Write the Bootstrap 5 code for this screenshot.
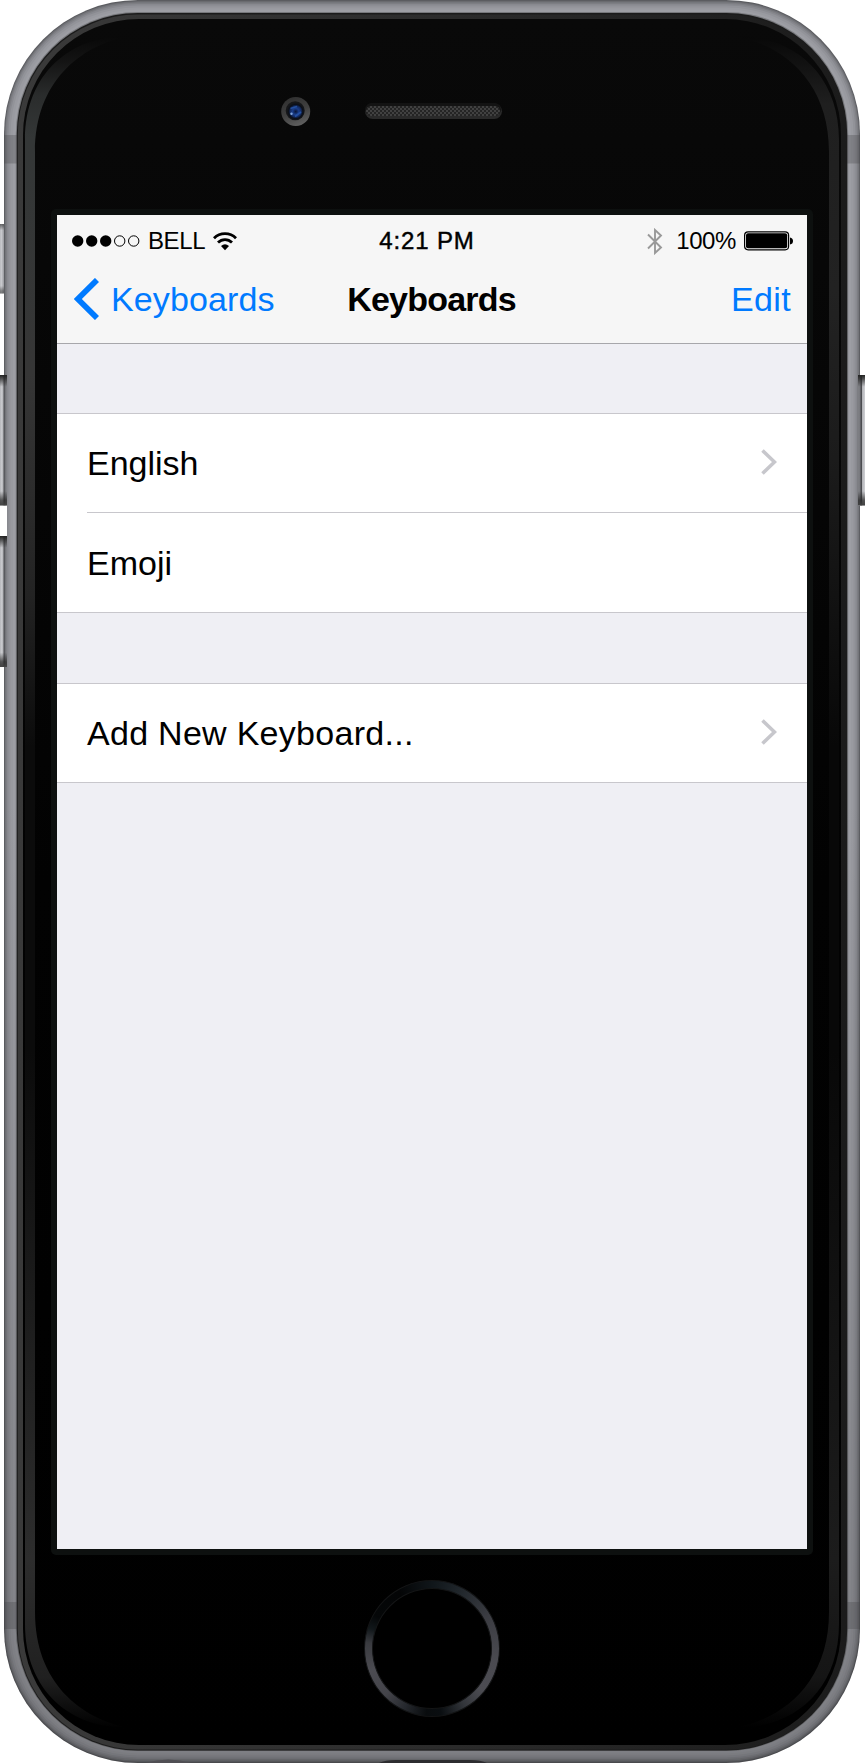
<!DOCTYPE html>
<html lang="en">
<head>
<meta charset="utf-8">
<meta name="viewport" content="width=device-width, initial-scale=1">
<title>Keyboards</title>
<link href="https://cdn.jsdelivr.net/npm/bootstrap@5.3.0/dist/css/bootstrap.min.css" rel="stylesheet">
<script src="https://cdn.jsdelivr.net/npm/bootstrap@5.3.0/dist/js/bootstrap.bundle.min.js"></script>
<style>
body{background:#fff;font-family:"Liberation Sans",Arial,sans-serif;color:#000;overflow:hidden}
.phone{width:865px;height:1763px;padding:215px 58px 0 57px}
.phone-art{z-index:0}
.display{z-index:1;width:750px;height:1334px;background:#efeff4}
.topbar{height:129px;background:#f6f6f6;border-bottom:1px solid #a7a7ab}
.status{height:52px;font-size:24px;line-height:52px;padding:0 14px 0 15px}
.status>*,.titles>*{flex:1 1 0}
.titles{height:76px;font-size:34px;line-height:64px;padding:0 16px 0 17px;color:#007aff}
.titles a{color:#007aff}
.back{height:64px;letter-spacing:.12px}
.back span{margin-left:12px}
.edit{letter-spacing:.35px}
.titles h1{font-size:34px;line-height:64px;letter-spacing:-.8px;color:#000;padding-right:2px}
.clock{-webkit-text-stroke:.45px #000;letter-spacing:.85px;padding-right:11px}
.carrier{margin-left:8px;letter-spacing:-.4px}
.charge{margin:0 8px 0 13px;letter-spacing:-.4px}
.cells{border-top:1px solid #c8c7cc;border-bottom:1px solid #c8c7cc;background:#fff;font-size:34px;line-height:98px;padding-left:30px;margin-top:69px}
.cells+.cells{margin-top:70px}
.cell{height:98px;padding-right:30px}
.cell+.cell{border-top:1px solid #c8c7cc;height:100px;line-height:100px}
.cell svg{margin-bottom:2px}
.add-label{letter-spacing:.28px}
.home{z-index:1;width:136px;height:137px;margin:31px 0 0 307px;border:1px solid #131415;
background:conic-gradient(#10161a 0deg,#20262b 25deg,#3b3c42 60deg,#4a4a50 100deg,#4c4c52 130deg,#33363b 150deg,#0a0e11 172deg,#090c0e 185deg,#26292e 205deg,#44444a 225deg,#4b4b51 250deg,#3a3b40 275deg,#11171a 288deg,#050708 300deg,#040506 330deg,#10161a 360deg)}
.home-face{width:120px;height:121px;background:#000;border:1px solid #141516}
</style>
</head>
<body>
<main class="phone position-relative d-flex flex-column">
<svg class="phone-art position-absolute top-0 start-0" width="865" height="1763" viewBox="0 0 865 1763" aria-hidden="true">
<defs>
<linearGradient id="btn" x1="0" x2="1"><stop offset="0" stop-color="#55565b"/><stop offset=".2" stop-color="#d0d1d5"/><stop offset=".45" stop-color="#b5b6ba"/><stop offset=".55" stop-color="#4b4c50"/><stop offset=".8" stop-color="#85868b"/><stop offset="1" stop-color="#65666a"/></linearGradient>
<linearGradient id="btnSilent" x1="0" x2="1"><stop offset="0" stop-color="#88898d"/><stop offset=".6" stop-color="#c9cace"/><stop offset="1" stop-color="#85868b"/></linearGradient>
<linearGradient id="btnEnds" x1="0" y1="0" x2="0" y2="1"><stop offset="0" stop-color="#222"/><stop offset=".03" stop-color="#222" stop-opacity=".7"/><stop offset=".09" stop-color="#222" stop-opacity="0"/><stop offset=".89" stop-color="#222" stop-opacity="0"/><stop offset=".96" stop-color="#222" stop-opacity=".7"/><stop offset="1" stop-color="#444"/></linearGradient>
<linearGradient id="shade" x1="0" y1="0" x2="0" y2="1"><stop offset="0" stop-color="#000" stop-opacity="0"/><stop offset=".45" stop-color="#000" stop-opacity="0"/><stop offset="1" stop-color="#000" stop-opacity=".2"/></linearGradient>
<linearGradient id="lip" x1="0" x2="1"><stop offset="0" stop-color="#3a3a3a"/><stop offset=".5" stop-color="#2c2c2c"/><stop offset="1" stop-color="#1b1b1b"/></linearGradient>
<linearGradient id="glass" x1="0" y1="0" x2="0" y2="1"><stop offset="0" stop-color="#090909"/><stop offset=".5" stop-color="#020202"/><stop offset="1" stop-color="#000"/></linearGradient>
<linearGradient id="sheenL" gradientUnits="userSpaceOnUse" x1="0" y1="36" x2="0" y2="1728"><stop offset="0" stop-color="#080808"/><stop offset=".015" stop-color="#141414"/><stop offset=".035" stop-color="#2a2c2c"/><stop offset=".06" stop-color="#343737"/><stop offset=".2" stop-color="#363636"/><stop offset=".33" stop-color="#232323"/><stop offset=".42" stop-color="#0b0b0b"/><stop offset=".6" stop-color="#0b0b0b"/><stop offset=".9" stop-color="#2d2d2d"/><stop offset=".97" stop-color="#202020"/><stop offset="1" stop-color="#000"/></linearGradient>
<linearGradient id="sheenR" gradientUnits="userSpaceOnUse" x1="0" y1="36" x2="0" y2="1728"><stop offset="0" stop-color="#080808"/><stop offset=".04" stop-color="#1f1f1f"/><stop offset=".15" stop-color="#222"/><stop offset=".25" stop-color="#1b1b1b"/><stop offset=".42" stop-color="#080808"/><stop offset=".6" stop-color="#080808"/><stop offset=".9" stop-color="#1c1c1c"/><stop offset=".97" stop-color="#151515"/><stop offset="1" stop-color="#000"/></linearGradient>
<linearGradient id="camRim" x1=".3" y1="0" x2=".7" y2="1"><stop offset="0" stop-color="#303030"/><stop offset=".5" stop-color="#404040"/><stop offset="1" stop-color="#626262"/></linearGradient>
<radialGradient id="lens"><stop offset="0" stop-color="#0a1636"/><stop offset=".35" stop-color="#1a3d8a"/><stop offset=".6" stop-color="#142c63"/><stop offset=".78" stop-color="#0b0f18"/><stop offset="1" stop-color="#0b0f18" stop-opacity="0"/></radialGradient>
<pattern id="mesh" width="4" height="4" patternUnits="userSpaceOnUse"><rect width="4" height="4" fill="#242424"/><rect width="2" height="2" fill="#414141"/><rect x="2" y="2" width="2" height="2" fill="#414141"/></pattern>
<clipPath id="rimClip"><path d="M0 0H865V375H858V505.500H865V1763H0V667H7V375H0Z"/></clipPath>
</defs>
<!-- side buttons -->
<rect x="-4" y="224" width="9" height="69.500" rx="2" fill="url(#btnSilent)"/>
<g fill="url(#btn)"><rect x="-1" y="375" width="9" height="130.500" rx="2"/><rect x="-1" y="536" width="9" height="131" rx="2"/></g>
<rect x="-867" y="375" width="10" height="130.500" rx="2" fill="url(#btn)" transform="scale(-1 1)"/>
<g fill="url(#btnEnds)"><rect x="-4" y="224" width="9" height="69.500" opacity=".6"/><rect x="-1" y="375" width="8" height="130.500"/><rect x="-1" y="536" width="8" height="131"/><rect x="857" y="375" width="9" height="130.500"/></g>
<!-- metal rim -->
<g clip-path="url(#rimClip)">
<rect x="4" y="0" width="856" height="1763" rx="134" fill="#5b5c60"/>
<rect x="4.800" y="1.200" width="854.400" height="1760.600" rx="133" fill="#6f7075"/>
<rect x="5.600" y="2.500" width="852.800" height="1758" rx="132" fill="#7d7e83"/>
<rect x="7" y="4" width="850" height="1755" rx="130" fill="#88898f"/>
<rect x="8.500" y="5.500" width="847" height="1752" rx="129" fill="#929399"/>
<rect x="10.500" y="7.500" width="843" height="1748" rx="127" fill="#999aa0"/>
<rect x="13" y="9.500" width="838" height="1744" rx="125" fill="#9d9ea4"/>
<rect x="15.800" y="12" width="832.400" height="1739" rx="122" fill="#77787c"/>
<rect x="4" y="0" width="856" height="1763" rx="134" fill="url(#shade)"/>
</g>
<g fill="#414247" opacity=".3"><rect x="4" y="135" width="13" height="28.500"/><rect x="847" y="135" width="13" height="28.500"/><rect x="4" y="1602" width="13" height="27"/><rect x="847" y="1602" width="13" height="27"/></g>
<!-- front glass -->
<rect x="16.800" y="13" width="830.400" height="1737.500" rx="121" fill="#1b1b1b"/>
<rect x="17.800" y="14.500" width="828.400" height="1735" rx="120" fill="url(#lip)"/>
<rect x="23" y="19" width="818" height="1726" rx="116" fill="url(#glass)"/>
<path d="M25 140C25 72 72 35 130 36C80 45 35 82 35 152V1612C35 1682 80 1719 130 1728C72 1729 25 1692 25 1624Z" fill="url(#sheenL)"/>
<path d="M839 140C839 72 792 35 734 36C784 45 829 82 829 152V1612C829 1682 784 1719 734 1728C792 1729 839 1692 839 1624Z" fill="url(#sheenR)"/>
<rect x="51" y="209" width="762" height="1346" rx="5" fill="#0d100f"/>
<!-- camera and earpiece -->
<circle cx="295.700" cy="111.500" r="14.500" fill="url(#camRim)"/>
<circle cx="295.200" cy="110.800" r="9.500" fill="#17181a"/>
<circle cx="295.700" cy="111.500" r="9" fill="url(#lens)"/>
<path d="M290.500 108.500L297 106.500M295 116.500L301 112" stroke="#2450a0" stroke-width="1.600"/>
<circle cx="291.500" cy="113.700" r="1.200" fill="#7fa5dd"/>
<rect x="365" y="103.500" width="137" height="15.500" rx="7.700" fill="#2a2a2a"/>
<rect x="365" y="103" width="136" height="13" rx="6.500" fill="#131313"/>
<rect x="366" y="106" width="134" height="10" rx="5" fill="url(#mesh)"/>
<!-- ports on the bottom edge -->
<path d="M379 1763Q385 1760 396 1760H470Q481 1760 487 1763Z" fill="#2d2d30"/>
<path d="M145 1763Q168 1756 192 1763Z" fill="#504f54"/>
</svg>

<section class="display position-relative">
<header class="topbar">
<div class="status d-flex align-items-center">
<div class="d-flex align-items-center">
<svg width="68" height="12" viewBox="0 0 68 12" aria-hidden="true"><circle cx="5.700" cy="6" r="5.700"/><circle cx="19.700" cy="6" r="5.700"/><circle cx="33.700" cy="6" r="5.700"/><g fill="none" stroke="#000"><circle cx="47.700" cy="6" r="5.200"/><circle cx="61.700" cy="6" r="5.200"/></g></svg>
<span class="carrier">BELL</span>
<svg class="ms-2" width="24" height="19" viewBox="0 0 24 19" aria-hidden="true"><g fill="none" stroke="#000" stroke-width="2.800"><path d="M1 6.200C7 .2 17 .2 23 6.200"/><path d="M5 10.600C9 6.600 15 6.600 19 10.600"/></g><path d="M8 14Q12 10.500 16 14L12 18.200Z"/></svg>
</div>
<div class="clock text-center">4:21 PM</div>
<div class="d-flex align-items-center justify-content-end">
<svg width="16" height="27" viewBox="0 0 16 27" fill="none" stroke="#999" stroke-width="1.900" aria-hidden="true"><path d="M1 6.500L14 19.500L8 25V2L14 7.500L1 20.500"/></svg>
<span class="charge">100%</span>
<svg width="49" height="20" viewBox="0 0 49 20" aria-hidden="true"><rect x=".6" y=".8" width="44" height="18" rx="3.500" fill="none" stroke="#000" stroke-width="1.200"/><rect x="2" y="2.300" width="41.200" height="15" rx="2"/><path d="M46 6.500Q49 7 49 10T46 13.500Z"/></svg>
</div>
</div>
<nav class="titles d-flex">
<a class="back d-flex align-items-center text-decoration-none" href="#"><svg width="25" height="42" viewBox="0 0 25 42" aria-hidden="true"><path d="M23 2L3.800 21L23 40" fill="none" stroke="#007aff" stroke-width="5.800"/></svg><span>Keyboards</span></a>
<h1 class="text-center fw-bold m-0">Keyboards</h1>
<a class="edit text-end text-decoration-none" href="#">Edit</a>
</nav>
</header>

<div class="cells">
<div class="cell d-flex align-items-center justify-content-between">English<svg width="16" height="26" viewBox="0 0 16 26" fill="none" stroke="#c7c7cc" stroke-width="3.600" aria-hidden="true"><path d="M1.500 1.500L13.500 13L1.500 24.500"/></svg></div>
<div class="cell">Emoji</div>
</div>
<div class="cells">
<div class="cell d-flex align-items-center justify-content-between"><span class="add-label">Add New Keyboard...</span><svg width="16" height="26" viewBox="0 0 16 26" fill="none" stroke="#c7c7cc" stroke-width="3.600" aria-hidden="true"><path d="M1.500 1.500L13.500 13L1.500 24.500"/></svg></div>
</div>
</section>
<div class="home rounded-circle d-flex align-items-center justify-content-center position-relative"><div class="home-face rounded-circle"></div></div>
</main>
</body>
</html>
